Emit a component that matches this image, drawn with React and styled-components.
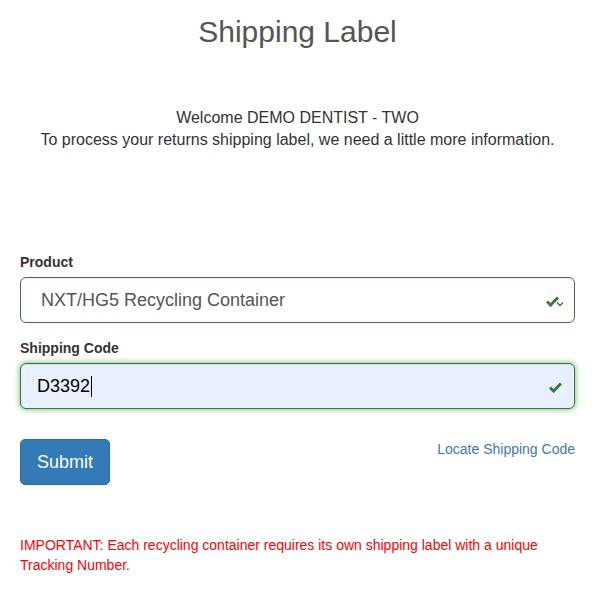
import React from 'react';
import styled, { createGlobalStyle } from 'styled-components';

const GlobalStyle = createGlobalStyle`
    body {
        margin: 0;
        background: #fff;
        font-family: "Liberation Sans", Arial, sans-serif;
        color: #333;
    }
`;

const Page = styled.div`
    width: 555px;
    padding: 15px 0 0 20px;
`;

const Title = styled.h1`
    margin: 0;
    font-size: 30px;
    line-height: 33px;
    font-weight: normal;
    color: #555;
    text-align: center;
`;

const Intro = styled.p`
    margin: 59px 0 0;
    font-size: 16px;
    line-height: 22px;
    text-align: center;
    color: #333;
`;

const Form = styled.div`
    margin-top: 101px;
`;

const Group = styled.div`
    margin-bottom: ${p => p.$last ? '0' : '15px'};
`;

const Label = styled.label`
    display: block;
    font-size: 14px;
    line-height: 20px;
    font-weight: bold;
    color: #333;
    margin-bottom: 5px;
`;

const Field = styled.div`
    position: relative;
    box-sizing: border-box;
    height: 46px;
    display: flex;
    align-items: center;
    padding-left: ${p => p.$indent}px;
    border: 1px solid #3c763d;
    border-radius: 6px;
    font-size: 18px;
    color: ${p => p.$autofill ? '#000' : '#555'};
    background: ${p => p.$autofill ? '#e8f0fe' : '#fff'};
    box-shadow: ${p => p.$autofill
        ? 'inset 0 1px 1px rgba(0,0,0,.075), 0 0 6px #67b168'
        : 'inset 0 1px 1px rgba(0,0,0,.075)'};
`;

const Caret = styled.span`
    display: inline-block;
    width: 1px;
    height: 21px;
    background: #000;
    margin-left: 1px;
`;

const Feedback = styled.span`
    position: absolute;
    right: ${p => p.$right}px;
    top: 50%;
    transform: translateY(-50%);
    display: flex;
    align-items: flex-end;
    height: 14px;
`;

const Actions = styled.div`
    display: flex;
    justify-content: space-between;
    align-items: flex-start;
    margin-top: 30px;
`;

const SubmitButton = styled.button`
    width: 90px;
    height: 46px;
    padding: 0;
    font-family: inherit;
    font-size: 18px;
    color: #fff;
    background: #337ab7;
    border: 1px solid #2e6da4;
    border-radius: 5px;
`;

const LocateLink = styled.a`
    font-size: 14px;
    line-height: 20px;
    color: #4177b5;
    text-decoration: none;
`;

const Important = styled.p`
    margin: 50px 0 0;
    font-size: 14px;
    line-height: 20px;
    color: #f00;
`;

const Check = () => (
    <svg width="13" height="11" viewBox="0 0 13 11">
        <path d="M1 5.5 L4.6 9 L12 1.5" fill="none" stroke="#3c763d" strokeWidth="3" />
    </svg>
);

const Chevron = () => (
    <svg width="8" height="6" viewBox="0 0 8 6" style={{ marginLeft: -3 }}>
        <path d="M1 1.5 L4 4.5 L7 1.5" fill="none" stroke="#555" strokeWidth="1.3" />
    </svg>
);

const App = () => {
    return (
        <>
            <GlobalStyle />
            <Page>
                <Title>Shipping Label</Title>
                <Intro>
                    Welcome DEMO DENTIST - TWO<br />
                    To process your returns shipping label, we need a little more information.
                </Intro>
                <Form>
                    <Group>
                        <Label>Product</Label>
                        <Field $indent={20}>
                            NXT/HG5 Recycling Container
                            <Feedback $right={10}><Check /><Chevron /></Feedback>
                        </Field>
                    </Group>
                    <Group $last>
                        <Label>Shipping Code</Label>
                        <Field $indent={16} $autofill>
                            D3392<Caret />
                            <Feedback $right={12}><Check /></Feedback>
                        </Field>
                    </Group>
                    <Actions>
                        <SubmitButton>Submit</SubmitButton>
                        <LocateLink href="#">Locate Shipping Code</LocateLink>
                    </Actions>
                </Form>
                <Important>
                    IMPORTANT: Each recycling container requires its own shipping label with a unique Tracking Number.
                </Important>
            </Page>
        </>
    );
};

export default App;
